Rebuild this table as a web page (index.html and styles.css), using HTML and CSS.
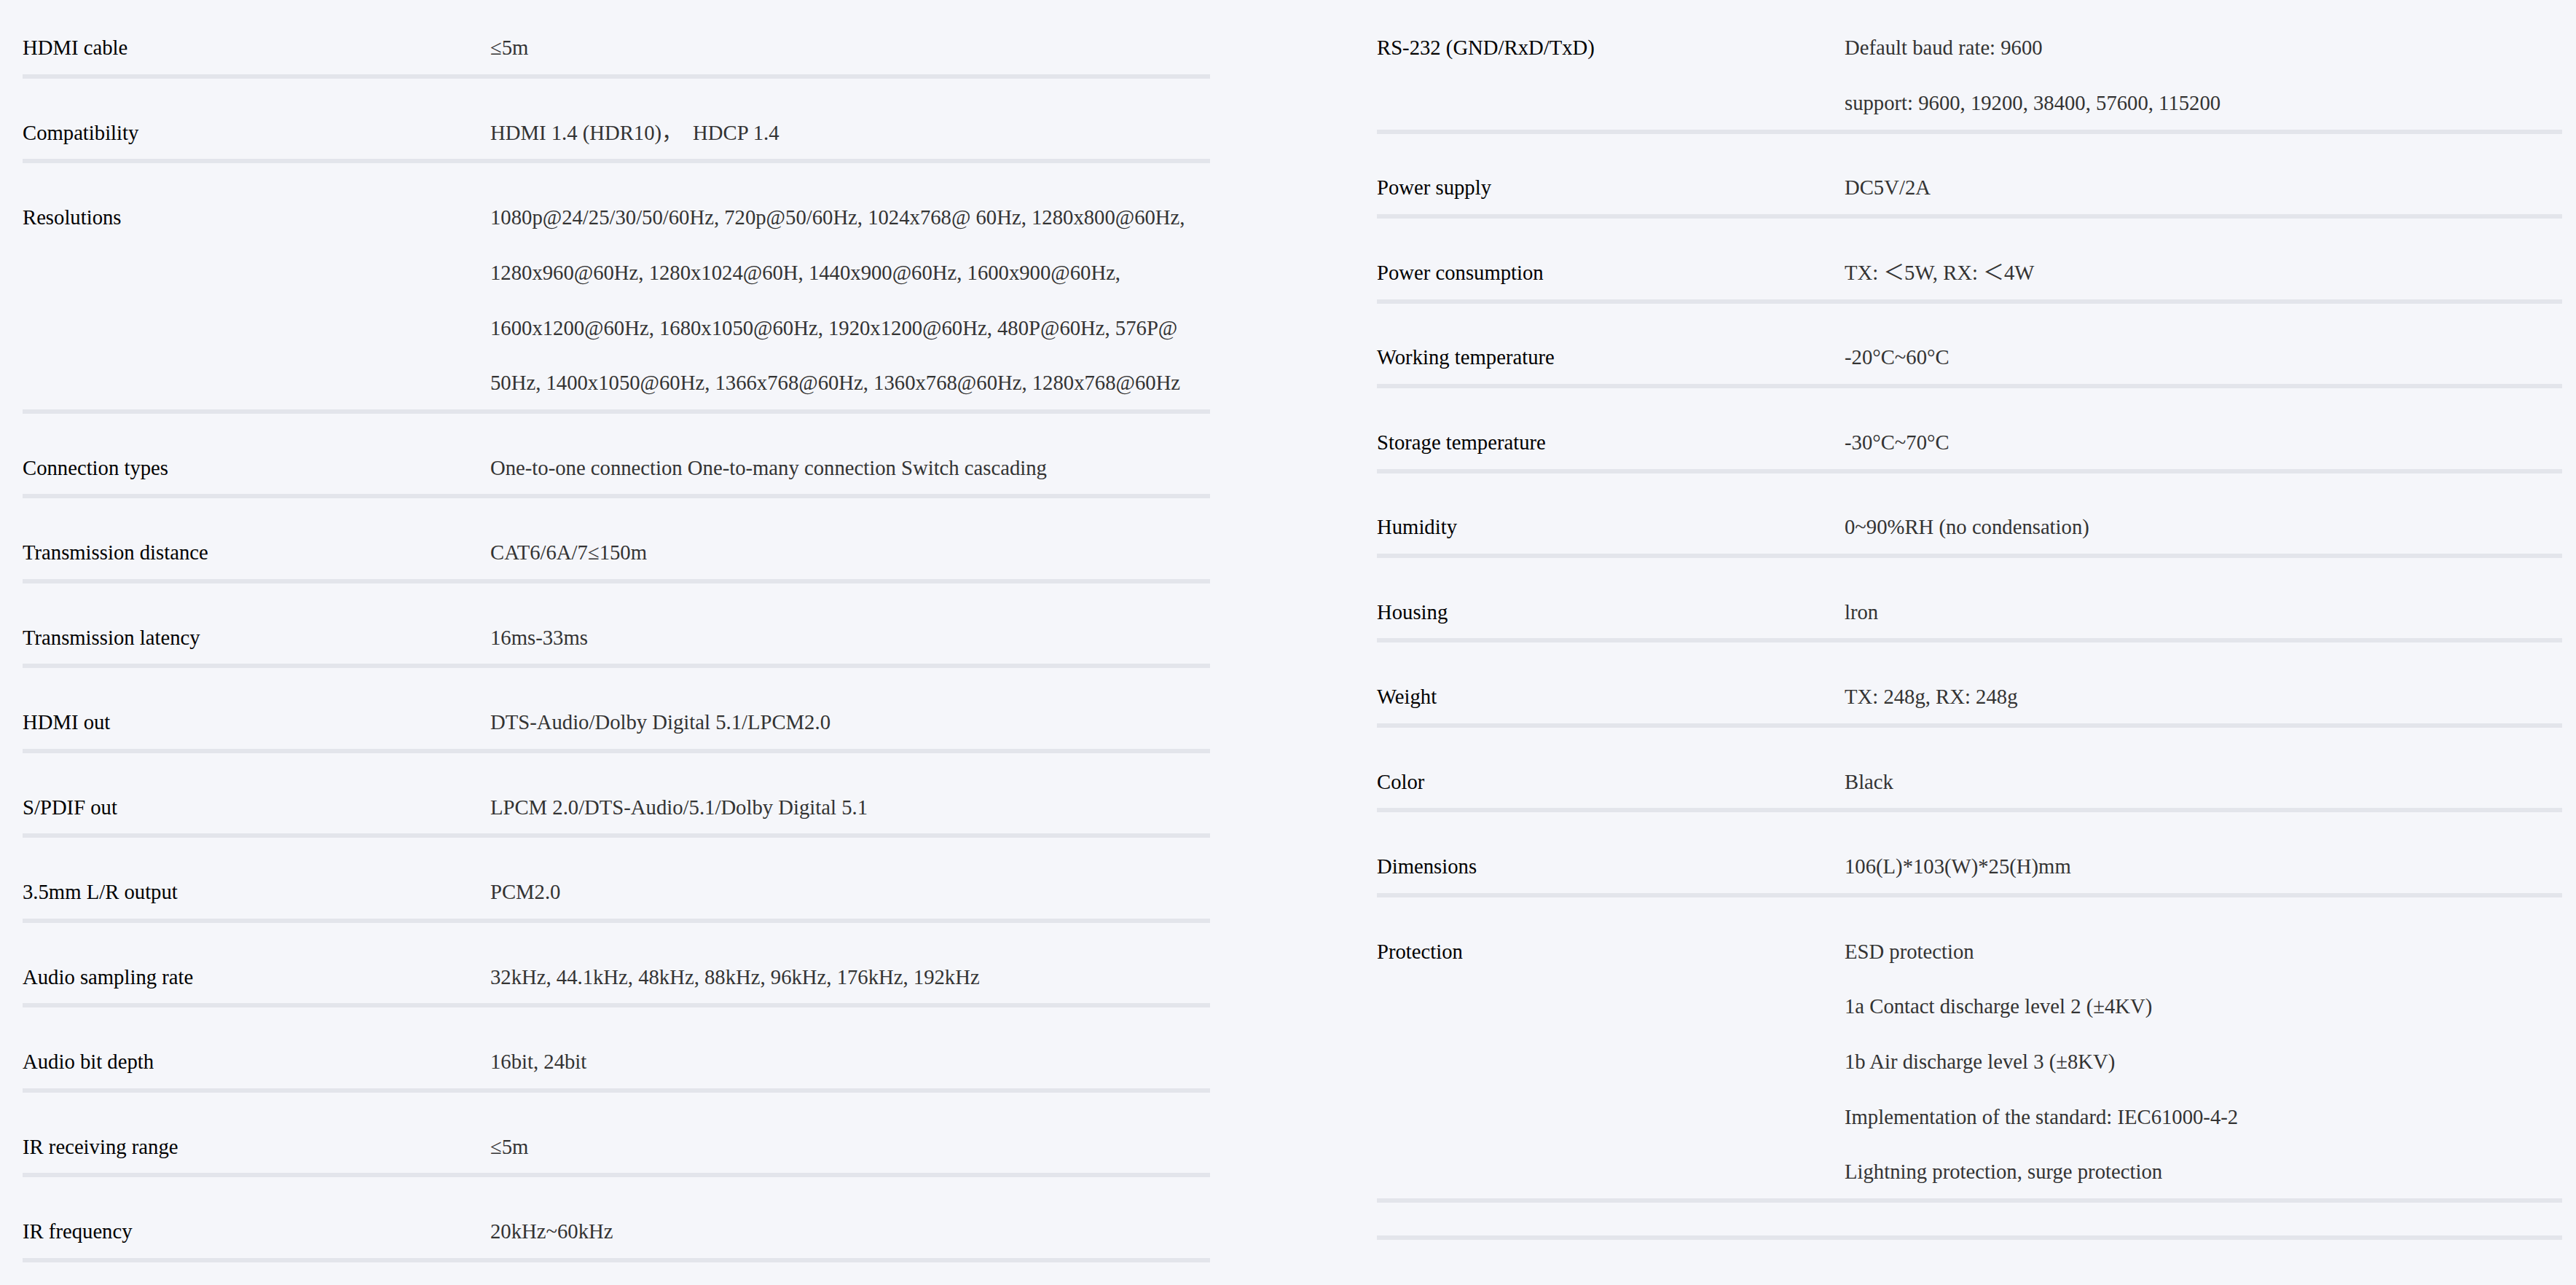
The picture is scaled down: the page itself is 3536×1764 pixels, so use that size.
FILE: index.html
```html
<!DOCTYPE html>
<html lang="en">
<head>
<meta charset="utf-8">
<title>Specifications</title>
<link rel="stylesheet" href="styles.css">
</head>
<body>
<div class="specs">
  <div class="col col-left">
    <div class="row"><div class="label">HDMI cable</div><div class="value"><p>≤5m</p></div></div>
    <div class="row"><div class="label">Compatibility</div><div class="value"><p>HDMI 1.4 (HDR10)，&nbsp; HDCP 1.4</p></div></div>
    <div class="row"><div class="label">Resolutions</div><div class="value"><p>1080p@24/25/30/50/60Hz, 720p@50/60Hz, 1024x768@ 60Hz, 1280x800@60Hz, 1280x960@60Hz, 1280x1024@60H, 1440x900@60Hz, 1600x900@60Hz, 1600x1200@60Hz, 1680x1050@60Hz, 1920x1200@60Hz, 480P@60Hz, 576P@ 50Hz, 1400x1050@60Hz, 1366x768@60Hz, 1360x768@60Hz, 1280x768@60Hz</p></div></div>
    <div class="row"><div class="label">Connection types</div><div class="value"><p>One-to-one connection One-to-many connection Switch cascading</p></div></div>
    <div class="row"><div class="label">Transmission distance</div><div class="value"><p>CAT6/6A/7≤150m</p></div></div>
    <div class="row"><div class="label">Transmission latency</div><div class="value"><p>16ms-33ms</p></div></div>
    <div class="row"><div class="label">HDMI out</div><div class="value"><p>DTS-Audio/Dolby Digital 5.1/LPCM2.0</p></div></div>
    <div class="row"><div class="label">S/PDIF out</div><div class="value"><p>LPCM 2.0/DTS-Audio/5.1/Dolby Digital 5.1</p></div></div>
    <div class="row"><div class="label">3.5mm L/R output</div><div class="value"><p>PCM2.0</p></div></div>
    <div class="row"><div class="label">Audio sampling rate</div><div class="value"><p>32kHz, 44.1kHz, 48kHz, 88kHz, 96kHz, 176kHz, 192kHz</p></div></div>
    <div class="row"><div class="label">Audio bit depth</div><div class="value"><p>16bit, 24bit</p></div></div>
    <div class="row"><div class="label">IR receiving range</div><div class="value"><p>≤5m</p></div></div>
    <div class="row"><div class="label">IR frequency</div><div class="value"><p>20kHz~60kHz</p></div></div>
  </div>
  <div class="col col-right">
    <div class="row"><div class="label">RS-232 (GND/RxD/TxD)</div><div class="value"><p>Default baud rate: 9600</p><p>support: 9600, 19200, 38400, 57600, 115200</p></div></div>
    <div class="row"><div class="label">Power supply</div><div class="value"><p>DC5V/2A</p></div></div>
    <div class="row"><div class="label">Power consumption</div><div class="value"><p>TX: ＜5W, RX: ＜4W</p></div></div>
    <div class="row"><div class="label">Working temperature</div><div class="value"><p>-20°C~60°C</p></div></div>
    <div class="row"><div class="label">Storage temperature</div><div class="value"><p>-30°C~70°C</p></div></div>
    <div class="row"><div class="label">Humidity</div><div class="value"><p>0~90%RH (no condensation)</p></div></div>
    <div class="row"><div class="label">Housing</div><div class="value"><p>lron</p></div></div>
    <div class="row"><div class="label">Weight</div><div class="value"><p>TX: 248g, RX: 248g</p></div></div>
    <div class="row"><div class="label">Color</div><div class="value"><p>Black</p></div></div>
    <div class="row"><div class="label">Dimensions</div><div class="value"><p>106(L)*103(W)*25(H)mm</p></div></div>
    <div class="row"><div class="label">Protection</div><div class="value"><p>ESD protection</p><p>1a Contact discharge level 2 (±4KV)</p><p>1b Air discharge level 3 (±8KV)</p><p>Implementation of the standard: IEC61000-4-2</p><p>Lightning protection, surge protection</p></div></div>
    <div class="row row-empty"></div>
  </div>
</div>
</body>
</html>
```

FILE: styles.css
```css
html, body {
  margin: 0;
  padding: 0;
  background: #f5f6fa;
}

body {
  font-family: "Liberation Serif", "Noto Sans CJK SC", serif;
  font-size: 28.7px;
  line-height: 75.6px;
  color: #000;
  overflow: hidden;
}

.specs {
  display: flex;
  gap: 229px;
  padding-left: 31px;
}

.col-left {
  width: 1630px;
}

.col-right {
  width: 1627px;
}

.row {
  display: flex;
  padding-top: 36.9px;
  border-bottom: 6px solid #e3e5eb;
}

.row:first-child {
  padding-top: 28.4px;
}

.row-empty {
  padding-top: 45px;
}

.label,
.value {
  margin-bottom: -2px;
}

.label {
  flex: 0 0 642px;
  color: #000;
}

.value {
  flex: 1 1 auto;
  color: #333;
}

.value p {
  margin: 0;
}
```
